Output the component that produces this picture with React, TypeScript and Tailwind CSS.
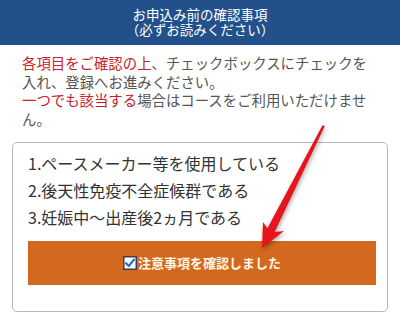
import React from "react";

const font = "font-['Noto_Sans_CJK_JP','Liberation_Sans',sans-serif]";

function CheckIcon() {
    return (
        <svg width="14" height="14" viewBox="0 0 14 14" className="shrink-0">
            <rect x="0.75" y="0.75" width="12.5" height="12.5" fill="#ffffff" stroke="#3a3f4a" strokeWidth="1.5" />
            <path d="M3 7.2 L5.8 10 L11 3.6" fill="none" stroke="#1f6fc6" strokeWidth="2.2" strokeLinecap="round" strokeLinejoin="round" />
        </svg>
    );
}

export default function App() {
    return (
        <div className={`relative w-[400px] h-[320px] bg-white overflow-hidden ${font}`}>
            {/* Header */}
            <div className="h-[45px] bg-[#22508b] flex flex-col items-center justify-center text-white text-[13.5px] leading-[15px] pb-[1px]">
                <span>お申込み前の確認事項</span>
                <span>（必ずお読みください）</span>
            </div>

            {/* Notice */}
            <p className="mt-[9px] pl-[22px] w-[376px] text-[14.4px] leading-[18.7px] text-[#555555]">
                <span className="text-[#c4222a]">各項目をご確認の上</span>、チェックボックスにチェックを入れ、登録へお進みください。
                <br />
                <span className="text-[#c4222a]">一つでも該当する</span>場合はコースをご利用いただけません。
            </p>

            {/* Checklist box */}
            <div className="mx-[12px] mt-[13px] h-[170px] border border-[#b8b8b8] rounded-[5px] pt-[7px] pl-[15px] pr-[11px]">
                <ul className="text-[16px] leading-[27px] text-[#333333]">
                    <li>1.ペースメーカー等を使用している</li>
                    <li>2.後天性免疫不全症候群である</li>
                    <li>3.妊娠中〜出産後2ヵ月である</li>
                </ul>
                <button className="mt-[10px] w-[348px] h-[44px] bg-[#d2691f] flex items-center justify-center gap-[1px] text-[13px] font-bold text-[#fff6e6]">
                    <CheckIcon />
                    <span>注意事項を確認しました</span>
                </button>
            </div>

            {/* Red arrow annotation */}
            <svg className="absolute inset-0 pointer-events-none drop-shadow-[1px_2px_2px_rgba(0,0,0,0.35)]" width="400" height="320" viewBox="0 0 400 320">
                <polygon
                    points="262,248 284,231 274.6,231.9 324.7,126.2 322.5,125.2 267.4,228.3 263,222"
                    fill="#e8141b"
                />
            </svg>
        </div>
    );
}
